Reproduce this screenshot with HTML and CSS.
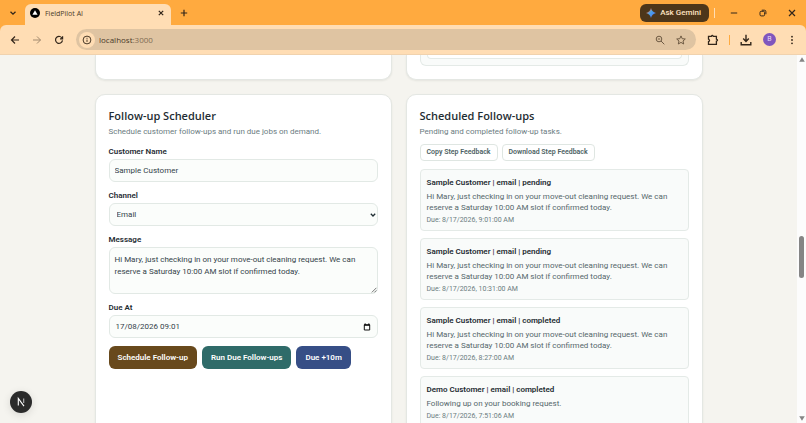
FILE: index.html
```html
<!DOCTYPE html>
<html lang="en">

<head>
    <meta charset="utf-8">
    <title>FieldPilot AI</title>
    <link rel="stylesheet" href="styles.css">
</head>

<body>
    <header class="browser">
        <div class="tabs">
            <button class="icon-btn tab-search" aria-label="Search tabs">
                <svg width="8" height="8" viewBox="0 0 8 8"><path d="M1.5 2.7 4 5.2 6.5 2.7" stroke-width="1.3"/></svg>
            </button>
            <div class="tab">
                <svg width="10" height="10" viewBox="0 0 10 10"><circle cx="5" cy="5" r="5" fill="#000" stroke="none"/><path d="M5 2.3 7.6 6.8H2.4z" fill="#fff" stroke="none"/></svg>
                <span class="tab-title">FieldPilot AI</span>
                <button class="icon-btn" aria-label="Close tab">
                    <svg width="8" height="8" viewBox="0 0 8 8"><path d="M1.8 1.8l4.4 4.4M6.2 1.8 1.8 6.2" stroke-width="1.2"/></svg>
                </button>
            </div>
            <button class="icon-btn new-tab" aria-label="New tab">
                <svg width="8" height="8" viewBox="0 0 8 8"><path d="M4 .8v6.4M.8 4h6.4" stroke-width="1.2"/></svg>
            </button>
            <button class="gemini">
                <svg width="10" height="10" viewBox="0 0 10 10">
                    <defs>
                        <linearGradient id="spark" x1="0" y1="0" x2="1" y2="1">
                            <stop offset="0.2" stop-color="#e8795a"/>
                            <stop offset="0.45" stop-color="#4aa3e8"/>
                            <stop offset="0.8" stop-color="#4f7cf0"/>
                        </linearGradient>
                    </defs>
                    <path d="M5 0Q5.9 4.1 10 5 5.9 5.9 5 10 4.1 5.9 0 5 4.1 4.1 5 0z" fill="url(#spark)" stroke="none"/>
                </svg>
                <span>Ask Gemini</span>
            </button>
            <span class="divider light"></span>
            <div class="window-btns">
                <button class="icon-btn" aria-label="Minimize">
                    <svg width="8" height="8" viewBox="0 0 8 8"><path d="M.8 4h6.4"/></svg>
                </button>
                <button class="icon-btn" aria-label="Restore">
                    <svg width="8" height="8" viewBox="0 0 8 8"><rect x="1" y="2.3" width="4.6" height="4.6" rx="1.2"/><path d="M2.8 1.2H5.4Q6.9 1.2 6.9 2.7V5.2"/></svg>
                </button>
                <button class="icon-btn" aria-label="Close">
                    <svg width="8" height="8" viewBox="0 0 8 8"><path d="M1 1l6 6M7 1 1 7" stroke-width="1.2"/></svg>
                </button>
            </div>
        </div>

        <div class="toolbar">
            <div class="nav">
                <button class="icon-btn" aria-label="Back">
                    <svg width="10" height="10" viewBox="0 0 10 10"><path d="M9 5H1.5M5 1.5 1.5 5 5 8.5" stroke-width="1.2"/></svg>
                </button>
                <button class="icon-btn dim" aria-label="Forward">
                    <svg width="10" height="10" viewBox="0 0 10 10"><path d="M1 5h7.5M5 1.5 8.5 5 5 8.5"/></svg>
                </button>
                <button class="icon-btn" aria-label="Reload">
                    <svg width="10" height="10" viewBox="0 0 10 10"><path d="M8.3 3.6A3.5 3.5 0 1 0 8.5 5.4M8.6 1.2V3.8H6" stroke-width="1.2"/></svg>
                </button>
            </div>
            <div class="address">
                <span class="site-info">
                    <svg width="10" height="10" viewBox="0 0 10 10"><circle cx="5" cy="5" r="3.9"/><path d="M5 4.6v2.3M5 2.8v1"/></svg>
                </span>
                <span class="url">localhost<span class="port">:3000</span></span>
                <button class="icon-btn soft" aria-label="Zoom">
                    <svg width="10" height="10" viewBox="0 0 10 10"><circle cx="4" cy="4" r="2.8"/><path d="M6 6l3.3 3.3M2.8 4h2.4"/></svg>
                </button>
                <button class="icon-btn soft" aria-label="Bookmark">
                    <svg width="10" height="10" viewBox="0 0 10 10"><path d="M5 .9 6.2 3.7 9.3 4 7 6 7.7 9 5 7.4 2.3 9 3 6 .7 4 3.8 3.7z"/></svg>
                </button>
            </div>
            <div class="tools">
                <button class="icon-btn" aria-label="Extensions">
                    <svg width="12" height="12" viewBox="0 0 12 12"><path d="M1.5 2.4H4.3Q5.3.2 6.3 2.4H9.4V5.2Q11.6 6.2 9.4 7.2V10.4H1.5V7.6Q3.6 6.4 1.5 5.2z" stroke-width="1.3"/></svg>
                </button>
                <span class="divider"></span>
                <button class="icon-btn" aria-label="Downloads">
                    <svg width="12" height="12" viewBox="0 0 12 12"><path d="M6 .8v6.4M3.2 4.6 6 7.4 8.8 4.6M1.2 8v2.8h9.6V8" stroke-width="1.4"/></svg>
                </button>
                <button class="avatar">B</button>
                <button class="icon-btn" aria-label="Menu">
                    <svg width="10" height="10" viewBox="0 0 10 10"><g fill="#33261a" stroke="none"><circle cx="5" cy="1.7" r=".9"/><circle cx="5" cy="5" r=".9"/><circle cx="5" cy="8.3" r=".9"/></g></svg>
                </button>
            </div>
        </div>
    </header>

    <div class="viewport">
        <main>
            <div class="grid">
                <section class="card card-end"></section>
                <section class="card card-end">
                    <div class="panel-end"><div class="panel-inner"></div></div>
                </section>

                <section class="card">
                    <h2>Follow-up Scheduler</h2>
                    <p class="hint">Schedule customer follow-ups and run due jobs on demand.</p>

                    <form>
                        <div class="field">
                            <label for="customer">Customer Name</label>
                            <input id="customer" type="text" value="Sample Customer">
                        </div>

                        <div class="field">
                            <label for="channel">Channel</label>
                            <div class="control">
                                <select id="channel">
                                    <option>Email</option>
                                </select>
                                <svg class="chevron" width="6" height="6" viewBox="0 0 6 6"><path d="M.8 1.8 3 4 5.2 1.8" stroke-width="1.3"/></svg>
                            </div>
                        </div>

                        <div class="field">
                            <label for="message">Message</label>
                            <div class="control">
                                <textarea id="message">Hi Mary, just checking in on your move-out cleaning request. We can reserve a Saturday 10:00 AM slot if confirmed today.</textarea>
                                <svg class="grip" width="6" height="6" viewBox="0 0 6 6"><path d="M.8 5.4 5.4.8M3.4 5.4l2-2" stroke-width=".8"/></svg>
                            </div>
                        </div>

                        <div class="field">
                            <label for="due">Due At</label>
                            <div class="control">
                                <input id="due" class="date" type="text" value="17/08/2026 09:01">
                                <button type="button" class="icon-btn calendar" aria-label="Pick a date">
                                    <svg width="8" height="8" viewBox="0 0 8 8"><path d="M1.3 1.8h5.4v5.2H1.3z"/><path d="M1 2.2h6M2.2.4v1.4M5.8.4v1.4" stroke-width="1.3"/></svg>
                                </button>
                            </div>
                        </div>

                        <div class="actions">
                            <button type="button" class="btn brown">Schedule Follow-up</button>
                            <button type="button" class="btn teal">Run Due Follow-ups</button>
                            <button type="button" class="btn blue">Due +10m</button>
                        </div>
                    </form>
                </section>

                <section class="card">
                    <h2>Scheduled Follow-ups</h2>
                    <p class="hint">Pending and completed follow-up tasks.</p>

                    <div class="feedback">
                        <button class="btn-small">Copy Step Feedback</button>
                        <button class="btn-small">Download Step Feedback</button>
                    </div>

                    <div class="tasks">
                        <article class="task">
                            <h3>Sample Customer | email | pending</h3>
                            <p>Hi Mary, just checking in on your move-out cleaning request. We can reserve a Saturday 10:00 AM slot if confirmed today.</p>
                            <small>Due: 8/17/2026, 9:01:00 AM</small>
                        </article>
                        <article class="task">
                            <h3>Sample Customer | email | pending</h3>
                            <p>Hi Mary, just checking in on your move-out cleaning request. We can reserve a Saturday 10:00 AM slot if confirmed today.</p>
                            <small>Due: 8/17/2026, 10:31:00 AM</small>
                        </article>
                        <article class="task">
                            <h3>Sample Customer | email | completed</h3>
                            <p>Hi Mary, just checking in on your move-out cleaning request. We can reserve a Saturday 10:00 AM slot if confirmed today.</p>
                            <small>Due: 8/17/2026, 8:27:00 AM</small>
                        </article>
                        <article class="task">
                            <h3>Demo Customer | email | completed</h3>
                            <p>Following up on your booking request.</p>
                            <small>Due: 8/17/2026, 7:51:06 AM</small>
                        </article>
                    </div>
                </section>
            </div>
        </main>

        <div class="scrollbar">
            <svg width="6" height="5" viewBox="0 0 6 5"><path d="M3 .3 5.8 4.7H.2z" fill="#858585" stroke="none"/></svg>
            <div class="track">
                <div class="thumb"></div>
            </div>
            <svg width="6" height="5" viewBox="0 0 6 5"><path d="M3 4.7 5.8.3H.2z" fill="#858585" stroke="none"/></svg>
        </div>

        <button class="dev-badge" aria-label="Open Next.js Dev Tools">
            <svg width="22" height="22" viewBox="0 0 22 22"><path d="M8.3 14.5V7.5L14 15.2" stroke="#fff" stroke-width="1.1"/><path d="M13.7 7.5v4.6" stroke="#bbb" stroke-width="1.1"/></svg>
        </button>
    </div>
</body>

</html>
```
FILE: styles.css
```css
* {
    box-sizing: border-box;
}

body {
    display: flex;
    flex-direction: column;
    height: 100vh;
    margin: 0;
    overflow: hidden;

    background: #f5f4ef;
    color: #1f2d33;

    font-family: Roboto, "Open Sans", sans-serif;
    font-size: 8px;
    line-height: 11px;
}

h2, h3, p {
    margin: 0;
}

button, input, select, textarea {
    font: inherit;
}

svg {
    display: block;
    fill: none;
    stroke: currentColor;
}

.icon-btn {
    padding: 0;
    background: none;
    border: 0;
    color: #33261a;
}

/* browser window */

.browser {
    flex: none;
    background: #ffaa3f;
    color: #4a3a28;
}

.tabs {
    display: flex;
    align-items: center;
    height: 25px;
    padding-right: 10px;
}

.tab-search {
    margin: 0 8px 0 9px;
}

.tab {
    display: flex;
    align-items: center;
    align-self: flex-end;
    gap: 5px;

    width: 146px;
    height: 21px;
    padding: 0 6px 3px 5px;

    background: #ffddb4;
    border-radius: 6px 6px 0 0;
}

.tab-title {
    flex: 1;
    font-family: "Open Sans", sans-serif;
    font-size: 7px;
}

.new-tab {
    margin-left: 9px;
}

.gemini {
    display: flex;
    align-items: center;
    gap: 4px;

    height: 18px;
    margin-left: auto;
    padding: 0 8px 0 6px;

    background: #4d361a;
    border: 0;
    border-radius: 6px;

    color: #ffe3c2;
    font-weight: 500;
}

.divider {
    width: 1px;
    height: 10px;
    background: #ffaa3f;
}

.divider.light {
    margin: 0 15px 0 5px;
    background: #ffddb4;
}

.window-btns {
    display: flex;
    gap: 21px;
}

.toolbar {
    display: flex;
    align-items: center;

    height: 30px;
    padding: 0 9px 0 10px;

    background: #ffddb4;
    border-bottom: 1px solid #f0d2ae;
    border-radius: 6px 6px 0 0;
}

.nav {
    display: flex;
    gap: 12px;
}

.dim {
    opacity: 0.45;
}

.address {
    display: flex;
    flex: 1;
    align-items: center;
    gap: 11px;

    height: 21px;
    margin: 0 11px 0 12px;
    padding: 0 10px 0 3px;

    background: #dfc4a2;
    border-radius: 11px;
}

.site-info {
    display: flex;
    align-items: center;
    justify-content: center;

    width: 16px;
    height: 16px;
    margin-right: -7px;

    background: #ffddb4;
    border-radius: 50%;
}

.url {
    flex: 1;
    font-family: "Open Sans", sans-serif;
}

.port {
    color: #806c54;
}

.soft {
    color: #6e5a43;
}

.tools {
    display: flex;
    align-items: center;
    gap: 11px;
}

.tools .divider {
    margin: 0 -1px;
}

.avatar {
    width: 13px;
    height: 13px;
    padding: 0;

    background: #8056bd;
    border: 0;
    border-radius: 50%;

    color: #e6d8f7;
    font-size: 7px;
    line-height: 13px;
}

/* page */

.viewport {
    position: relative;
    display: flex;
    flex: 1;
    min-height: 0;
}

main {
    flex: 1;
    overflow: hidden;
}

.grid {
    display: grid;
    grid-template-columns: 1fr 1fr;
    gap: 14px;

    max-width: 608px;
    margin: 0 auto;
}

.card {
    padding: 14px 13px;

    background: #fff;
    border: 1px solid #e4e7e3;
    border-radius: 10px;
    box-shadow: 0 1px 2px rgba(40, 50, 40, 0.08);
}

.card-end {
    height: 25px;
    padding-top: 0;
    border-top: 0;
    border-radius: 0 0 10px 10px;
}

.panel-end {
    height: 11px;
    padding: 0 6px 6px;

    background: #f9fbfa;
    border: 1px solid #e4eae7;
    border-top: 0;
    border-radius: 0 0 6px 6px;
}

.panel-inner {
    height: 4px;
    background: #fff;
    border: 1px solid #e4eae7;
    border-top: 0;
    border-radius: 0 0 4px 4px;
}

h2 {
    font-family: "Open Sans", sans-serif;
    font-size: 11px;
    font-weight: 600;
    line-height: 14px;
}

.hint {
    margin-top: 3px;
    color: #6b7c7f;
}

form {
    display: flex;
    flex-direction: column;
    gap: 8px;
    margin-top: 9px;
}

.field {
    display: flex;
    flex-direction: column;
    gap: 2px;
}

label {
    font-weight: 600;
}

.control {
    position: relative;
}

input, select, textarea {
    display: block;
    width: 100%;
    height: 23px;
    padding: 0 5px;

    background: #fbfdfb;
    border: 1px solid #e2e9e5;
    border-radius: 6px;

    color: #34434a;
}

select {
    padding: 0 7px;
    appearance: none;
}

textarea {
    height: 47px;
    padding: 6px 5px;
    line-height: 12px;
    resize: none;
}

.date {
    padding: 0 6px;
}

.chevron {
    position: absolute;
    top: 9px;
    right: 2px;
}

.grip {
    position: absolute;
    right: 1px;
    bottom: 1px;
    color: #555;
}

.calendar {
    position: absolute;
    top: 8px;
    right: 7px;
    color: #111;
}

.actions {
    display: flex;
    gap: 5px;
}

.btn {
    height: 23px;
    padding: 0 9px;

    border: 0;
    border-radius: 6px;

    color: #fff;
    font-weight: 600;
}

.brown {
    background: #68491c;
}

.teal {
    background: #2f6b69;
}

.blue {
    background: #364e86;
}

.feedback {
    display: flex;
    gap: 4px;
    margin-top: 7px;
}

.btn-small {
    height: 17px;
    padding: 0 6px;

    background: #fff;
    border: 1px solid #dfe6e2;
    border-radius: 4px;

    color: #4d5f63;
    font-size: 7px;
    font-weight: 600;
}

.tasks {
    display: flex;
    flex-direction: column;
    gap: 7px;
    margin-top: 8px;
}

.task {
    padding: 7px 6px 5px;

    background: #f9fbfa;
    border: 1px solid #e4eae7;
    border-radius: 4px;
}

h3 {
    font-size: 8px;
    font-weight: 600;
}

.task p {
    margin-top: 3px;
    color: #55676b;
}

small {
    display: block;
    margin-top: 2px;

    color: #6b7c7f;
    font-size: 7px;
    line-height: 10px;
}

.scrollbar {
    display: flex;
    flex-direction: column;
    align-items: center;

    width: 9px;
    padding: 2px 0;

    background: #fcfcfc;
}

.track {
    display: flex;
    flex: 1;
    flex-direction: column;
}

.track::before {
    flex: 174;
    content: "";
}

.track::after {
    flex: 138;
    content: "";
}

.thumb {
    width: 5px;
    height: 42px;
    background: #858585;
    border-radius: 3px;
}

.dev-badge {
    position: absolute;
    bottom: 10px;
    left: 10px;

    width: 22px;
    height: 22px;
    padding: 0;

    background: #2b2b2b;
    border: 0;
    border-radius: 50%;
    box-shadow: 0 2px 8px rgba(0, 0, 0, 0.12);
}
```
